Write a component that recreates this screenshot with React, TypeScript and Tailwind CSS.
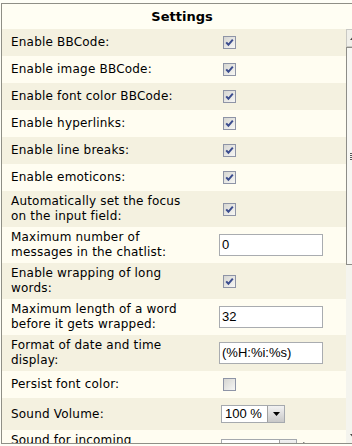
import type { ReactNode } from "react";

type Row = {
  label: ReactNode;
  control: ReactNode;
  h: string;
};

function Checkbox({ checked = true }: { checked?: boolean }) {
  return (
    <svg width="13" height="13" viewBox="0 0 13 13" className="ml-[4px] block">
      <defs>
        <linearGradient id={checked ? "cbOn" : "cbOff"} x1="0" y1="0" x2="1" y2="1">
          <stop offset="0" stopColor="#d4d4d0" />
          <stop offset="1" stopColor="#f8f8f6" />
        </linearGradient>
      </defs>
      <rect x="0.5" y="0.5" width="12" height="12" fill={`url(#${checked ? "cbOn" : "cbOff"})`} stroke="#8e94a6" />
      {checked && (
        <path d="M3.2 6.4 L5.4 8.8 L9.8 3.6" fill="none" stroke="#3b4d8e" strokeWidth="2" />
      )}
    </svg>
  );
}

function TextBox({ value }: { value: string }) {
  return (
    <div className="h-[22px] w-[104px] border border-[#a9acb0] bg-white pl-[2px] font-['Liberation_Sans',Arial,sans-serif] text-[13px] leading-[20px] tracking-normal text-black">
      {value}
    </div>
  );
}

function Select({ value, width }: { value: string; width: number }) {
  return (
    <div
      className="ml-[2px] flex h-[18px] items-stretch border border-[#a5a9ae] bg-white font-['Liberation_Sans',Arial,sans-serif] text-[13px] leading-[16px] tracking-normal text-black"
      style={{ width }}
    >
      <span className="flex-1 pl-[3px]">{value}</span>
      <span className="flex w-[17px] items-center justify-center border-l border-[#a0a0a0] bg-gradient-to-b from-[#f2f2f2] to-[#c8c8c8]">
        <svg width="7" height="4" viewBox="0 0 7 4">
          <path d="M0 0 H7 L3.5 4 Z" fill="#000" />
        </svg>
      </span>
    </div>
  );
}

const ROWS: Row[] = [
  { label: "Enable BBCode:", control: <Checkbox />, h: "h-[27px]" },
  { label: "Enable image BBCode:", control: <Checkbox />, h: "h-[27px]" },
  { label: "Enable font color BBCode:", control: <Checkbox />, h: "h-[27px]" },
  { label: "Enable hyperlinks:", control: <Checkbox />, h: "h-[27px]" },
  { label: "Enable line breaks:", control: <Checkbox />, h: "h-[27px]" },
  { label: "Enable emoticons:", control: <Checkbox />, h: "h-[27px]" },
  {
    label: (
      <>
        Automatically set the focus
        <br />
        on the input field:
      </>
    ),
    control: <Checkbox />,
    h: "h-[36px]",
  },
  {
    label: (
      <>
        Maximum number of
        <br />
        messages in the chatlist:
      </>
    ),
    control: <TextBox value="0" />,
    h: "h-[36px]",
  },
  {
    label: (
      <>
        Enable wrapping of long
        <br />
        words:
      </>
    ),
    control: <Checkbox />,
    h: "h-[36px]",
  },
  {
    label: (
      <>
        Maximum length of a word
        <br />
        before it gets wrapped:
      </>
    ),
    control: <TextBox value="32" />,
    h: "h-[36px]",
  },
  {
    label: (
      <>
        Format of date and time
        <br />
        display:
      </>
    ),
    control: <TextBox value="(%H:%i:%s)" />,
    h: "h-[36px]",
  },
  { label: "Persist font color:", control: <Checkbox checked={false} />, h: "h-[27px]" },
  { label: "Sound Volume:", control: <Select value="100 %" width={64} />, h: "h-[32px]" },
  {
    label: (
      <>
        Sound for incoming
        <br />
        messages:
      </>
    ),
    control: (
      <div className="flex items-center gap-[6px]">
        <Select value="sound_1" width={76} />
        <svg width="10" height="12" viewBox="0 0 10 12">
          <path d="M0.5 0.5 L9 6 L0.5 11.5 Z" fill="#fff" stroke="#666" />
        </svg>
      </div>
    ),
    h: "h-[36px]",
  },
];

export default function App() {
  return (
    <div className="h-[446px] w-[352px] overflow-hidden bg-[#fefef6] pt-[3px] pl-[1px] font-['DejaVu_Sans',Verdana,sans-serif] text-[12px] tracking-[0.2px] text-black">
      <div className="flex h-[441px] w-[361px] flex-col overflow-hidden border-t border-b border-l border-[#8f8f86]">
        {/* header */}
        <div className="flex h-[25px] shrink-0 items-center justify-center bg-[#fffef3] text-[13px] font-bold tracking-normal">
          Settings
        </div>

        {/* rows + scrollbar */}
        <div className="flex min-h-0 flex-1">
          <div className="w-[344px] shrink-0 overflow-hidden">
            {ROWS.map((row, i) => (
              <div
                key={i}
                className={`flex items-center ${row.h} ${i % 2 === 0 ? "bg-[#f4f1e0]" : "bg-[#fffdf1]"}`}
              >
                <div className="w-[217px] shrink-0 pl-[9px] leading-[15px]">{row.label}</div>
                <div className="flex-1">{row.control}</div>
              </div>
            ))}
          </div>

          {/* scrollbar strip */}
          <div className="flex w-[17px] shrink-0 flex-col bg-[#f4f4ee]">
            <div className="flex h-[18px] items-center border border-[#c9c9c4] bg-[#f0f0ea] pl-[3px]">
              <svg width="5" height="3" viewBox="0 0 5 3">
                <path d="M0 3 L2.5 0 L5 3 Z" fill="#444" />
              </svg>
            </div>
            <div className="flex h-[218px] items-center border border-[#8d8d88] bg-[#f7f7f3] pl-[3px]">
              <div className="flex flex-col gap-[1px]">
                <div className="h-[1px] w-[4px] bg-[#555]" />
                <div className="h-[1px] w-[4px] bg-[#555]" />
                <div className="h-[1px] w-[4px] bg-[#555]" />
                <div className="h-[1px] w-[4px] bg-[#555]" />
              </div>
            </div>
            <div className="flex-1" />
            <div className="flex h-[16px] items-center pl-[4px]">
              <svg width="5" height="3" viewBox="0 0 5 3">
                <path d="M0 0 L2.5 3 L5 0 Z" fill="#444" />
              </svg>
            </div>
          </div>
        </div>
      </div>
    </div>
  );
}
